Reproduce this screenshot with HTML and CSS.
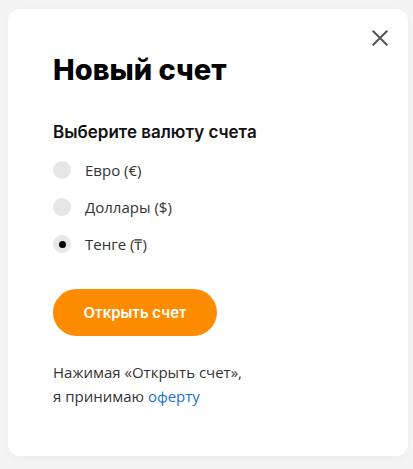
FILE: index.html
```html
<!DOCTYPE html>
<html lang="ru">
<head>
<meta charset="utf-8">
<title>Новый счет</title>
<link rel="stylesheet" href="styles.css">
</head>
<body>
<div class="modal">
  <button class="close" aria-label="Закрыть">
    <svg width="16" height="16" viewBox="0 0 16 16"><path d="M0.7 0.7L15.3 15.3M15.3 0.7L0.7 15.3" stroke="#555" stroke-width="2" fill="none"/></svg>
  </button>
  <h1 class="title">Новый счет</h1>
  <div class="subtitle">Выберите валюту счета</div>
  <ul class="options">
    <li class="option"><span class="radio"></span><span class="label">Евро (€)</span></li>
    <li class="option"><span class="radio"></span><span class="label">Доллары ($)</span></li>
    <li class="option"><span class="radio checked"></span><span class="label">Тенге (₸)</span></li>
  </ul>
  <button class="submit">Открыть счет</button>
  <p class="note">Нажимая «Открыть счет»,<br>я принимаю <a href="#" class="link">оферту</a></p>
</div>
</body>
</html>
```
FILE: styles.css
```css
html, body {
  margin: 0;
  padding: 0;
}
body {
  background: #f4f4f4;
  font-family: "Open Sans", "Liberation Sans", sans-serif;
  color: #333;
  width: 413px;
  height: 469px;
  overflow: hidden;
  padding-top: 9px;
  padding-left: 8px;
  box-sizing: border-box;
}
.modal {
  position: relative;
  width: 400px;
  height: 447px;
  box-sizing: border-box;
  background: #fff;
  border-radius: 12px;
  box-shadow: 0 2px 8px rgba(0,0,0,0.04);
  padding: 44px 45px 0 45px;
}
.close {
  position: absolute;
  top: 21px;
  right: 20px;
  width: 16px;
  height: 16px;
  padding: 0;
  border: 0;
  background: none;
  display: flex;
}
.title {
  margin: 0;
  font-family: "Inter", sans-serif;
  font-weight: 800;
  font-size: 29px;
  line-height: 34px;
  color: #000;
  letter-spacing: 0;
}
.subtitle {
  margin-top: 34px;
  font-family: "Inter", sans-serif;
  font-weight: 600;
  font-size: 17px;
  line-height: 22px;
  color: #111;
}
.options {
  list-style: none;
  margin: 18px 0 0 0;
  padding: 0;
  display: flex;
  flex-direction: column;
  gap: 19px;
}
.option {
  display: flex;
  align-items: center;
  gap: 14px;
  height: 18px;
}
.radio {
  width: 18px;
  height: 18px;
  border-radius: 50%;
  background: #e6e6e6;
  display: flex;
  align-items: center;
  justify-content: center;
}
.radio.checked::after {
  content: "";
  width: 7px;
  height: 7px;
  border-radius: 50%;
  background: #000;
}
.label {
  font-size: 15px;
  color: #333;
}
.submit {
  margin-top: 36px;
  width: 164px;
  height: 47px;
  border: 0;
  border-radius: 24px;
  background: #ff8c00;
  color: #fff;
  font-family: "Inter", sans-serif;
  font-weight: 600;
  font-size: 15px;
  display: block;
}
.note {
  margin: 24px 0 0 0;
  font-size: 15px;
  line-height: 24px;
  color: #333;
}
.link {
  color: #1a6fd4;
  text-decoration: none;
}
```
